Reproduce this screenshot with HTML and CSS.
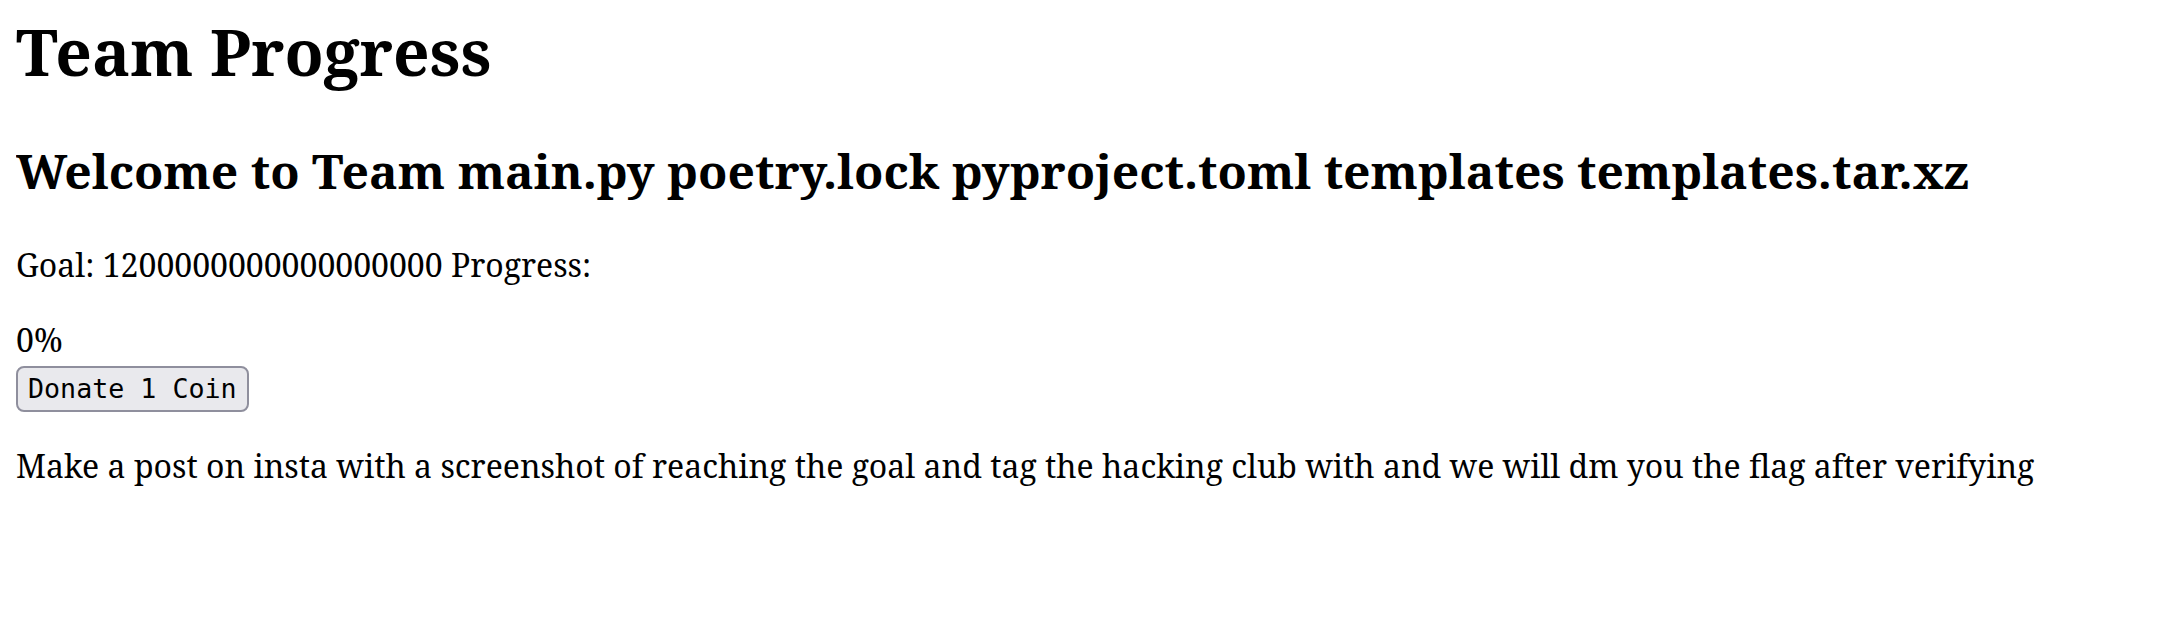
FILE: index.html
```html
<!DOCTYPE html>
<html lang="en">
<head>
<meta charset="utf-8">
<title>Team Progress</title>
<link rel="stylesheet" href="styles.css">
</head>
<body class="page">
  <h1 class="title">Team Progress</h1>
  <h2 class="welcome">Welcome to Team main.py poetry.lock pyproject.toml templates templates.tar.xz</h2>
  <p class="text">Goal: 1200000000000000000 Progress: </p>
  <div class="progress">0%</div>
  <div class="actions"><button class="donate" type="button">Donate 1 Coin</button></div>
  <p class="text">Make a post on insta with a screenshot of reaching the goal and tag the hacking club with and we will dm you the flag after verifying</p>
</body>
</html>
```

FILE: styles.css
```css
html {
  background: #ffffff;
}

.page {
  margin: 8px 16px 16px;
  font-family: "Noto Serif", "DejaVu Serif", serif;
  font-size: 32px;
  line-height: normal;
  color: #000000;
}

.title {
  font-size: 64px;
  font-weight: bold;
  margin: 0 0 42.88px;
}

.welcome {
  font-size: 48px;
  font-weight: bold;
  margin: 39.84px 0;
}

.text {
  margin: 32px 0;
}

.progress {
  margin: 0;
}

.actions {
  margin: 0;
  padding-top: 3px;
}

.donate {
  font-family: "DejaVu Sans Mono", monospace;
  font-size: 26.67px;
  line-height: normal;
  color: #000000;
  background: #e9e9ed;
  border: 2px solid #8f8f9d;
  border-radius: 8px;
  padding: 5px 10px 6px;
  margin: 0;
}
```
